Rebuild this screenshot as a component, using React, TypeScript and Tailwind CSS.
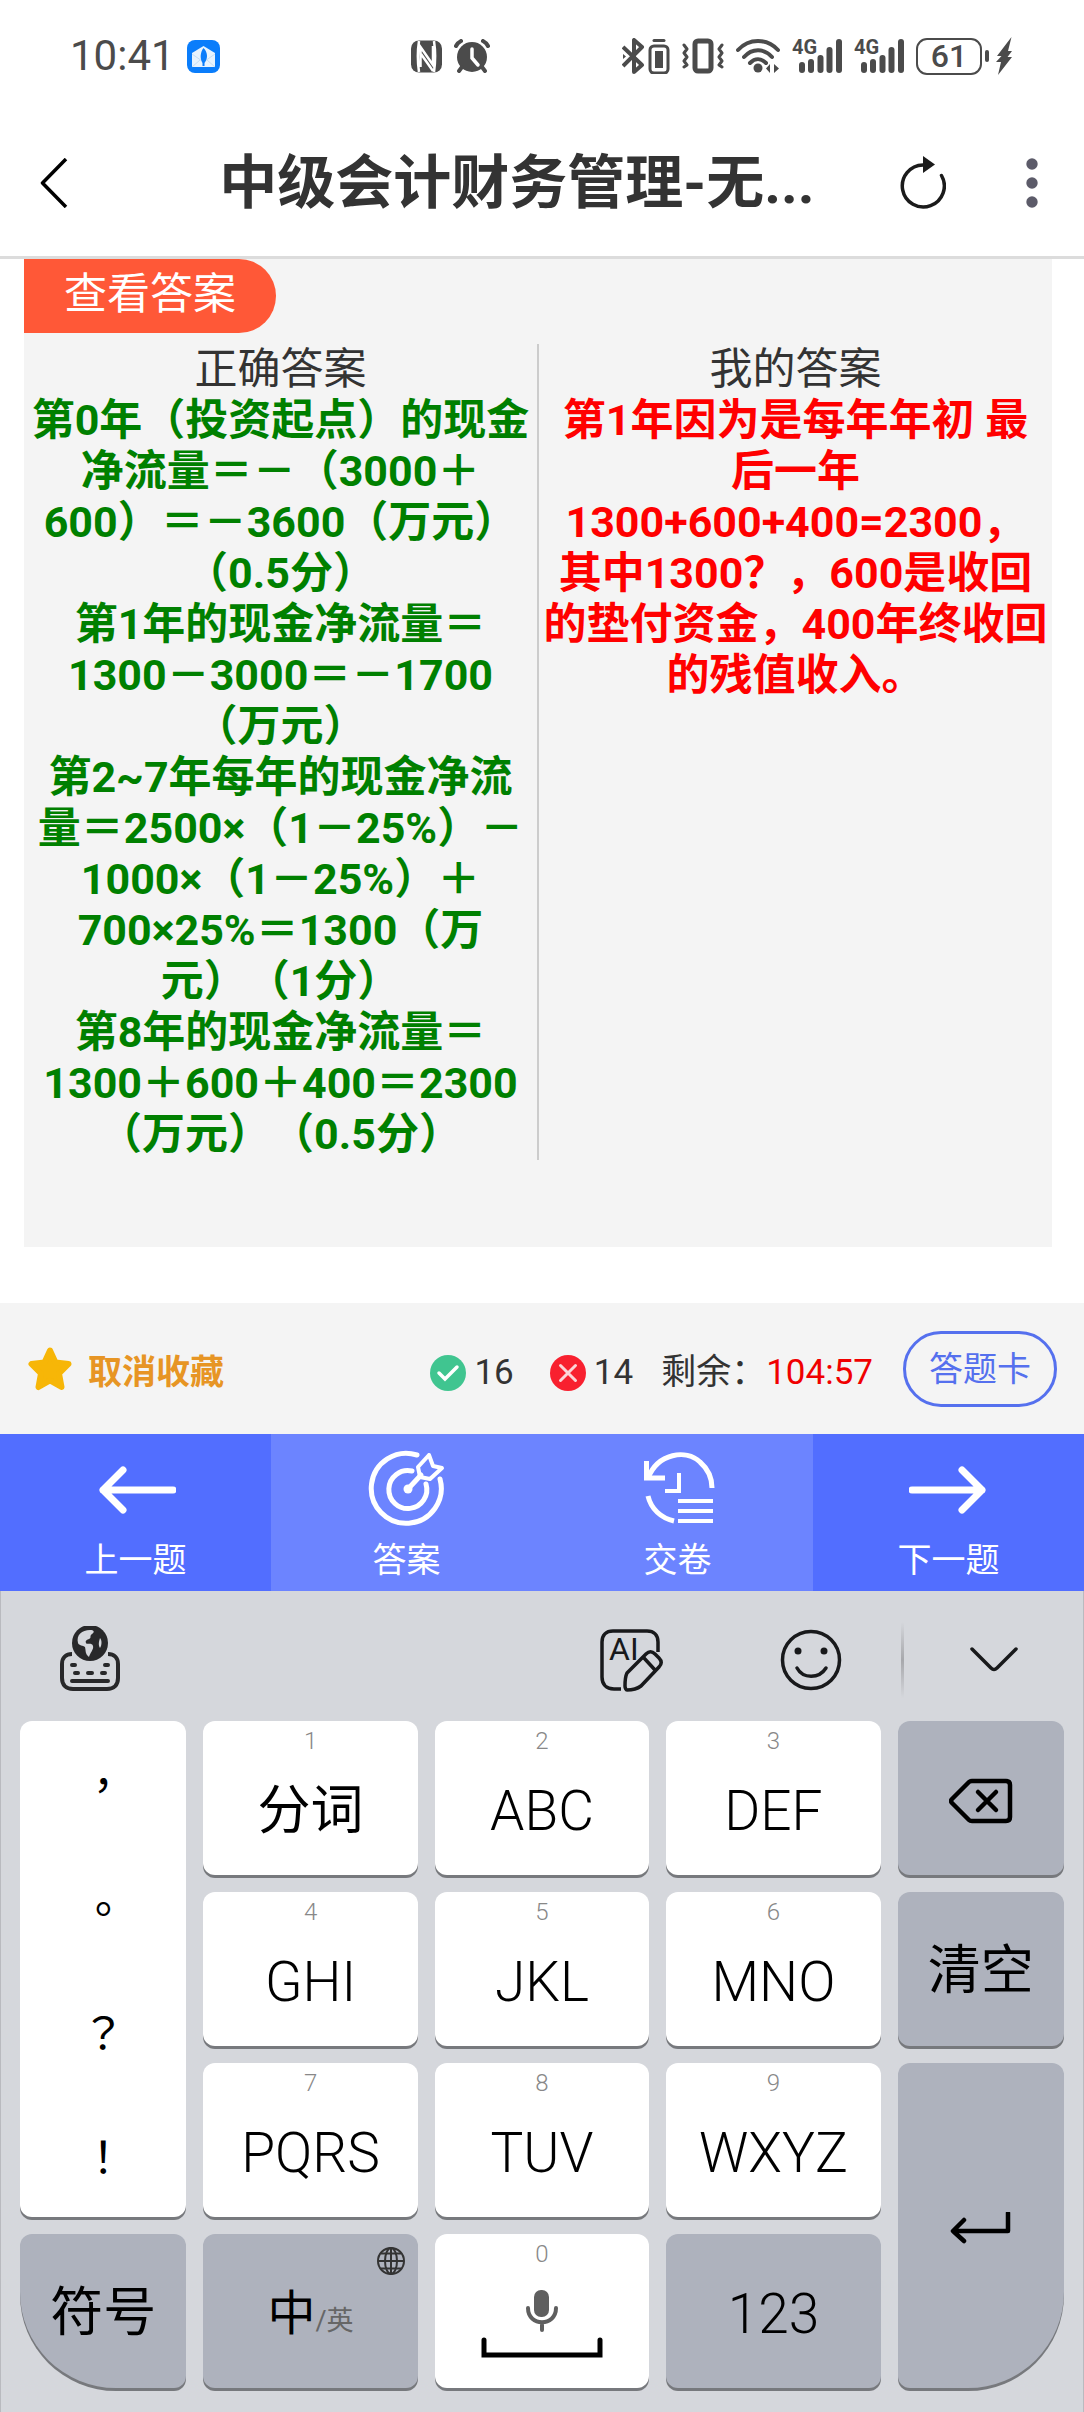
import React from "react";
import clsx from "clsx";

const correctAnswer = [
  "第0年（投资起点）的现金",
  "净流量＝－（3000＋",
  "600）＝－3600（万元）",
  "（0.5分）",
  "第1年的现金净流量＝",
  "1300－3000＝－1700",
  "（万元）",
  "第2~7年每年的现金净流",
  "量＝2500×（1－25%）－",
  "1000×（1－25%）＋",
  "700×25%＝1300（万",
  "元）（1分）",
  "第8年的现金净流量＝",
  "1300＋600＋400＝2300",
  "（万元）（0.5分）",
];

const myAnswer = [
  "第1年因为是每年年初 最",
  "后一年",
  "1300+600+400=2300，",
  "其中1300？，600是收回",
  "的垫付资金，400年终收回",
  "的残值收入。",
];

function SignalIcon() {
  return (
    <svg width="50" height="44" viewBox="0 -4 50 44" fill="#4b4b4b">
      <text
        x="0"
        y="16"
        fontSize="20"
        fontWeight="700"
        fontFamily="Roboto, sans-serif"
      >
        4G
      </text>
      <rect x="7" y="24" width="6" height="11" rx="3" />
      <rect x="16" y="21" width="6" height="14" rx="3" />
      <rect x="25.500" y="17" width="6" height="18" rx="3" />
      <rect x="34.500" y="9" width="6" height="26" rx="3" />
      <rect x="44" y="1" width="6" height="34" rx="3" />
    </svg>
  );
}

function StatusBar() {
  return (
    <div className="flex h-[112px] items-center pl-[70px] pr-[71px] text-[#4b4b4b]">
      <span className="text-[42px] leading-[48px]">10:41</span>
      <svg className="ml-3" width="33" height="33" viewBox="0 0 33 33">
        <rect width="33" height="33" rx="8" fill="#0a7dfb" />
        <path d="M5 13 16.500 6 28 13v14H5z" fill="#e8f3fd" />
        <path d="M5 14 16.500 22 28 14M5 27l8-7M28 27l-8-7" stroke="#c5def5" fill="none" />
        <path d="M16.500 8c4 4 5 10 1 15v3h-2v-3c-3-5-2-11 1-15z" fill="#0a7dfb" />
      </svg>

      <svg className="ml-auto" width="31" height="33" viewBox="0 0 31 33">
        <rect width="31" height="32" y="0.500" rx="8" fill="#4b4b4b" />
        <path
          d="M8 1C6.500 11 6.500 22 8 32M23 1c1.500 10 1.500 21 0 31M9.500 27V7l12.500 18V6M10 14l12 17"
          stroke="#fff"
          strokeWidth="2.500"
          fill="none"
        />
      </svg>
      <svg className="ml-3" width="36" height="34" viewBox="0 0 36 34" fill="none" stroke="#4b4b4b">
        <circle cx="18" cy="18" r="15" fill="#4b4b4b" stroke="none" />
        <path d="M2 7c1-2 3-4 5-5M34 7c-1-2-3-4-5-5M8 28l-3 4M28 28l3 4" strokeWidth="4" strokeLinecap="round" />
        <path d="M18 10v9l6 7" stroke="#fff" strokeWidth="3.500" strokeLinecap="round" />
      </svg>

      <div className="ml-[132px] flex items-center gap-3">
        <svg width="48" height="36" viewBox="0 0 48 36" fill="none" stroke="#4b4b4b">
          <path d="M1 28 20 9 12 2v32l8-7L1 9" strokeWidth="4" strokeLinejoin="round" />
          <path d="M1 16v5l3-2.500z" fill="#4b4b4b" stroke="none" />
          <rect x="28" y="8" width="18" height="27" rx="4" strokeWidth="3" />
          <path d="M32 2.500h10" strokeWidth="3" strokeLinecap="round" />
          <rect x="33" y="13" width="8" height="17" fill="#4b4b4b" stroke="none" />
        </svg>
        <svg width="42" height="36" viewBox="0 0 42 36" fill="none" stroke="#4b4b4b">
          <rect x="13" y="3" width="16" height="30" rx="3" strokeWidth="5" />
          <path
            d="M2 7l3 4-3 4 3 4-3 4 3 4-3 2M40 7l-3 4 3 4-3 4 3 4-3 4 3 2"
            strokeWidth="3"
            strokeLinecap="round"
            strokeLinejoin="round"
          />
        </svg>
        <svg width="44" height="36" viewBox="0 0 44 36" fill="none" stroke="#4b4b4b">
          <path
            d="M2 12c11-12 29-12 40 0M8 19c8-9 20-9 28 0M14 25c5-5 11-5 16 0"
            strokeWidth="4"
            strokeLinecap="round"
          />
          <circle cx="22" cy="30" r="4.500" fill="#4b4b4b" stroke="none" />
          <path d="M34 26v9l-4-4.500M38 35v-9l5 4.500z" fill="#4b4b4b" stroke="none" />
        </svg>
        <SignalIcon />
        <SignalIcon />
        <div className="flex items-center">
          <span className="flex h-[37px] w-[66px] items-center justify-center rounded-[11px] border-2 border-[#4b4b4b] text-[32px] font-medium leading-[32px]">
            61
          </span>
          <span className="ml-[3px] h-3 w-1 rounded-full bg-[#4b4b4b]" />
          <svg className="ml-[7px]" width="17" height="38" viewBox="0 0 17 38">
            <path d="M15.500 0 1 19h4.500L0 25h5L2 38 16 20h-4.500l4.500-6h-4z" fill="#4b4b4b" />
          </svg>
        </div>
      </div>
    </div>
  );
}

function TitleBar() {
  return (
    <header className="flex h-[147px] items-center border-b-[3px] border-[#dcdcdc] pb-0.5 pl-10 pr-[46px]">
      <button type="button" aria-label="返回">
        <svg width="28" height="50" viewBox="0 0 28 50" fill="none" stroke="#000" strokeWidth="3.500">
          <path d="M26 1 2.500 25 26 49" strokeLinejoin="round" />
        </svg>
      </button>
      <h1 className="flex-1 pl-[66px] text-center text-[58px] font-bold leading-[72px] text-[#333]">
        中级会计财务管理-无...
      </h1>
      <button type="button" aria-label="刷新" className="mr-20">
        <svg width="46" height="54" viewBox="0 0 46 54" fill="none">
          <path d="M23 9a21 21 0 1 0 18.500 10.500" stroke="#1b1b1b" strokeWidth="3.500" strokeLinecap="round" />
          <path d="M23 0v17l12-8.500z" fill="#1b1b1b" />
        </svg>
      </button>
      <button type="button" aria-label="更多">
        <svg width="12" height="50" viewBox="0 0 12 50" fill="#5c5b69">
          <circle cx="6" cy="6" r="5.700" />
          <circle cx="6" cy="25" r="5.700" />
          <circle cx="6" cy="44" r="5.700" />
        </svg>
      </button>
    </header>
  );
}

function Lines({ lines }: { lines: string[] }) {
  return (
    <>
      {lines.map((line, i) => (
        <React.Fragment key={i}>
          {i > 0 && <br />}
          {line}
        </React.Fragment>
      ))}
    </>
  );
}

function AnswerPanel() {
  return (
    <main className="px-6 sm:mr-2">
      <section className="bg-[#f4f4f4] pb-[87px]">
        <button
          type="button"
          className="block h-[74px] rounded-r-full bg-[#ff5837] px-10 pb-1 text-[43px] leading-[70px] text-white"
        >
          查看答案
        </button>
        <table className="mt-[11px] w-full table-fixed text-center text-[43px] leading-[51px] [text-spacing-trim:space-all]">
          <thead>
            <tr className="text-[#333]">
              <th className="border-r-2 border-[#ccc] p-0 font-normal">正确答案</th>
              <th className="p-0 font-normal">我的答案</th>
            </tr>
          </thead>
          <tbody>
            <tr className="align-top font-bold">
              <td className="whitespace-nowrap border-r-2 border-[#ccc] p-0 text-[#008000]">
                <Lines lines={correctAnswer} />
              </td>
              <td className="whitespace-nowrap p-0 text-[#f00]">
                <Lines lines={myAnswer} />
              </td>
            </tr>
          </tbody>
        </table>
      </section>
    </main>
  );
}

function ScoreBar() {
  return (
    <div className="mt-14 flex h-[131px] items-center bg-[#f4f4f4] pl-7 pr-[27px] text-[35px] leading-[48px] text-[#333]">
      <button type="button" className="flex items-center gap-4 text-[34px] font-bold text-[#e79524]">
        <svg width="44" height="44" viewBox="0 0 44 44">
          <path
            d="M22 3.500 27.500 15.500 40.500 17 31 26.500 33.500 40 22 33.500 10.500 40 13 26.500 3.500 17 16.500 15.500z"
            fill="#f7b607"
            stroke="#f7b607"
            strokeWidth="6"
            strokeLinejoin="round"
          />
        </svg>
        <span className="pt-1.5">取消收藏</span>
      </button>
      <div className="ml-auto flex items-center gap-2 pt-2">
        <svg width="36" height="36" viewBox="0 0 36 36">
          <circle cx="18" cy="18" r="18" fill="#40c590" />
          <path d="m9 18 6 6 12-12" stroke="#fff" strokeWidth="3.500" fill="none" strokeLinecap="round" />
        </svg>
        <span>16</span>
      </div>
      <div className="ml-9 flex items-center gap-2 pt-2">
        <svg width="36" height="36" viewBox="0 0 36 36">
          <circle cx="18" cy="18" r="18" fill="#f8202f" />
          <path d="m10.500 10.500 15 15m0-15-15 15" stroke="#fbd5d8" strokeWidth="3" strokeLinecap="round" />
        </svg>
        <span>14</span>
      </div>
      <div className="ml-7 pt-2">
        剩余：<span className="text-[#f00000]">104:57</span>
      </div>
      <button
        type="button"
        className="ml-[30px] h-[76px] rounded-full border-[3px] border-[#5570ee] px-[23px] text-[34px] text-[#5570ee]"
      >
        答题卡
      </button>
    </div>
  );
}

function NavButton({
  label,
  dark,
  children,
}: {
  label: string;
  dark?: boolean;
  children: React.ReactNode;
}) {
  return (
    <button
      type="button"
      className={clsx(
        "flex h-[157px] flex-col items-center pt-4 text-[34px] leading-[48px] text-white",
        dark ? "bg-[#526eff]" : "bg-[#6c84ff]"
      )}
    >
      <svg
        className="mb-1.5"
        width="80"
        height="80"
        viewBox="0 0 80 80"
        fill="none"
        stroke="#fff"
        strokeWidth="5"
        strokeLinecap="round"
      >
        {children}
      </svg>
      {label}
    </button>
  );
}

function NavBar() {
  return (
    <nav className="grid grid-cols-4">
      <NavButton label="上一题" dark>
        <path d="M77 40H7M27 20 7 40l20 20" strokeWidth="7" strokeLinejoin="round" />
      </NavButton>
      <NavButton label="答案">
        <path d="M50 5A35 35 0 1 0 73 29" />
        <path d="M45 21A19 19 0 1 0 59 34" />
        <path d="M41 39 54 25" />
        <circle cx="41" cy="39" r="4.500" fill="#fff" stroke="none" />
        <path d="m62 5-11 12 2 10 10 2 12-11-9-2z" strokeWidth="4" strokeLinejoin="round" />
      </NavButton>
      <NavButton label="交卷">
        <path d="M10 28C20 3 48-1 62 12c8 7 12 17 12 26" strokeLinecap="butt" />
        <path d="M8.500 11v17H27" strokeLinecap="butt" strokeWidth="5" />
        <path d="M41 23v18H27" strokeLinecap="butt" strokeWidth="4" />
        <path d="M10 46c3 13 13 22 26 25" strokeLinecap="butt" />
        <path d="M40 51h35M40 61h35M40 71h35" strokeLinecap="butt" strokeWidth="4" />
      </NavButton>
      <NavButton label="下一题" dark>
        <path d="M3 40h70M53 20l20 20-20 20" strokeWidth="7" strokeLinejoin="round" />
      </NavButton>
    </nav>
  );
}

function KeyboardToolbar() {
  return (
    <div className="flex h-[130px] items-center pl-[59px] pr-[63px] pt-2">
      <button type="button" aria-label="切换键盘">
        <svg width="60" height="68" viewBox="0 0 60 68" fill="none" stroke="#28282a" strokeWidth="4">
          <path
            d="M12 28C6 28 2 32 2 38v14c0 7 4 11 11 11h34c7 0 11-4 11-11V38c0-6-4-10-10-10"
            strokeLinecap="butt"
          />
          <circle cx="30" cy="17" r="18" fill="#28282a" stroke="none" />
          <path
            d="M18 17c-2-8 4-13 12-13 4 0 5 2 2 4s0 4-3 5-4 2-3 4 6-1 7 3c1 3-3 7-4 11-4-3-3-6-4-10-2-2-6-1-7-4zM40 12c2 2 2 7 0 10-2-3-1-7 0-10z"
            fill="#d5d7dc"
            stroke="none"
          />
          <path d="M12 39h3M45 39h3M15 47h3M28 47h4M42 47h3M12 55h36" strokeLinecap="round" />
        </svg>
      </button>
      <button type="button" aria-label="AI 写作" className="ml-auto">
        <svg width="64" height="64" viewBox="0 0 64 64" fill="none" stroke="#18191b" strokeWidth="3.500">
          <path d="M21 61H14C6 61 2 56 2 49V14C2 7 6 3 13 3h34c7 0 11 4 11 11v10" />
          <text x="9" y="32" fontSize="32" fontFamily="Roboto, sans-serif" fill="#18191b" stroke="none">
            AI
          </text>
          <path
            d="M25 58c0-5 0-9 2-13l19-19c3-3 6-3 9 0l4 4c3 3 3 6 0 9L41 58c-4 3-9 4-14 4-1 0-2-2-2-4zM44 30l11 12"
            strokeLinejoin="round"
          />
        </svg>
      </button>
      <button type="button" aria-label="表情" className="ml-[116px]">
        <svg width="62" height="62" viewBox="0 0 62 62" fill="none" stroke="#18191b" strokeWidth="3.500">
          <circle cx="31" cy="31" r="28.500" />
          <circle cx="18" cy="22" r="3.500" fill="#18191b" stroke="none" />
          <circle cx="44" cy="22" r="3.500" fill="#18191b" stroke="none" />
          <path d="M17 39c6 11 22 11 29 0" strokeLinecap="round" />
        </svg>
      </button>
      <span className="ml-[59px] h-[76px] w-[3px] bg-gradient-to-b from-[#d5d7dc] via-[#a7a8ac] to-[#d5d7dc]" />
      <button type="button" aria-label="收起键盘" className="ml-16">
        <svg width="52" height="30" viewBox="0 0 52 30" fill="none" stroke="#18191b" strokeWidth="3.500">
          <path d="m4 4 19 19q3 3 6 0L48 4" strokeLinecap="round" />
        </svg>
      </button>
    </div>
  );
}

const keyBase =
  "relative flex items-center justify-center rounded-xl pt-1.5 text-black shadow-[0_3px_0_#77797d]";

function LetterKey({ digit, label }: { digit: string; label: string }) {
  return (
    <button
      type="button"
      className="flex flex-col items-center rounded-xl bg-white pt-1 text-[55px] font-light leading-[64px] text-black shadow-[0_3px_0_#77797d]"
    >
      <span className="mb-[22px] text-[24px] leading-[32px] text-[#888]">{digit}</span>
      {label}
    </button>
  );
}

function Keyboard() {
  return (
    <section
      aria-label="键盘"
      className="border-x border-[#b9babf] bg-[#d5d7dc] pb-6"
    >
      <KeyboardToolbar />
      <div className="grid auto-rows-[154px] grid-cols-[166fr_214fr_214fr_214fr_166fr] gap-[17px] px-[19px]">
        <div
          lang="zh-TW"
          className="row-span-3 grid grid-rows-4 rounded-xl bg-white font-['Noto_Sans_CJK_TC',sans-serif] text-[44px] text-black shadow-[0_3px_0_#77797d]"
        >
          <button type="button">，</button>
          <button type="button">。</button>
          <button type="button">？</button>
          <button type="button">！</button>
        </div>
        <button
          type="button"
          className="flex flex-col items-center rounded-xl bg-white pt-1 text-[53px] leading-[64px] text-black shadow-[0_3px_0_#77797d]"
        >
          <span className="mb-[22px] text-[24px] font-light leading-[32px] text-[#888]">1</span>
          分词
        </button>
        <LetterKey digit="2" label="ABC" />
        <LetterKey digit="3" label="DEF" />
        <button type="button" aria-label="删除" className={clsx(keyBase, "bg-[#aeb2bd]")}>
          <svg width="64" height="46" viewBox="0 0 64 46" fill="none" stroke="#000" strokeWidth="4.500">
            <path
              d="M23 3h34q4 0 4 4v32q0 4-4 4H23q-2 0-3-1L3 25q-2-2 0-4L20 4q1-1 3-1z"
              strokeLinejoin="round"
            />
            <path d="m29 14 18 18m0-18L29 32" strokeLinecap="round" />
          </svg>
        </button>

        <LetterKey digit="4" label="GHI" />
        <LetterKey digit="5" label="JKL" />
        <LetterKey digit="6" label="MNO" />
        <button type="button" className={clsx(keyBase, "bg-[#aeb2bd] text-[53px]")}>
          清空
        </button>

        <LetterKey digit="7" label="PQRS" />
        <LetterKey digit="8" label="TUV" />
        <LetterKey digit="9" label="WXYZ" />
        <button
          type="button"
          aria-label="换行"
          className={clsx(keyBase, "row-span-2 rounded-br-[96px] bg-[#aeb2bd]")}
        >
          <svg width="62" height="34" viewBox="0 0 62 34" fill="none" stroke="#000" strokeWidth="4.500">
            <path d="M58 1v18H4M14 8 3 19l11 10" strokeLinecap="round" strokeLinejoin="round" />
          </svg>
        </button>

        <button
          type="button"
          className={clsx(keyBase, "rounded-bl-[96px] bg-[#aeb2bd] text-[53px]")}
        >
          符号
        </button>
        <button type="button" className={clsx(keyBase, "bg-[#aeb2bd] text-[48px]")}>
          <span>
            中<span className="text-[27px] text-[#666]">/英</span>
          </span>
          <svg
            className="absolute right-3 top-3"
            width="30"
            height="30"
            viewBox="0 0 30 30"
            fill="none"
            stroke="#333"
            strokeWidth="2"
          >
            <circle cx="15" cy="15" r="13" />
            <ellipse cx="15" cy="15" rx="6" ry="13" />
            <path d="M15 2v26M2 15h26M5 7.500h20M5 22.500h20" />
          </svg>
        </button>
        <button
          type="button"
          aria-label="空格"
          className="flex flex-col items-center rounded-xl bg-white pt-1 shadow-[0_3px_0_#77797d]"
        >
          <span className="text-[24px] font-light leading-[32px] text-[#888]">0</span>
          <svg className="mt-5" width="122" height="70" viewBox="0 0 122 70" fill="none">
            <rect x="53" y="0" width="15" height="27" rx="7" fill="#5f5f5f" />
            <path d="M47 18c0 19 28 19 28 0M61 33v7" stroke="#5f5f5f" strokeWidth="4" strokeLinecap="round" />
            <path d="M3 50v15h116V50" stroke="#000" strokeWidth="5" strokeLinecap="round" />
          </svg>
        </button>
        <button type="button" className={clsx(keyBase, "bg-[#aeb2bd] text-[55px] font-light")}>
          123
        </button>
      </div>
    </section>
  );
}

export default function App() {
  return (
    <div
      lang="zh-CN"
      className="w-full bg-white font-[Roboto,'Noto_Sans_CJK_SC',sans-serif]"
    >
      <StatusBar />
      <TitleBar />
      <AnswerPanel />
      <ScoreBar />
      <NavBar />
      <Keyboard />
    </div>
  );
}
